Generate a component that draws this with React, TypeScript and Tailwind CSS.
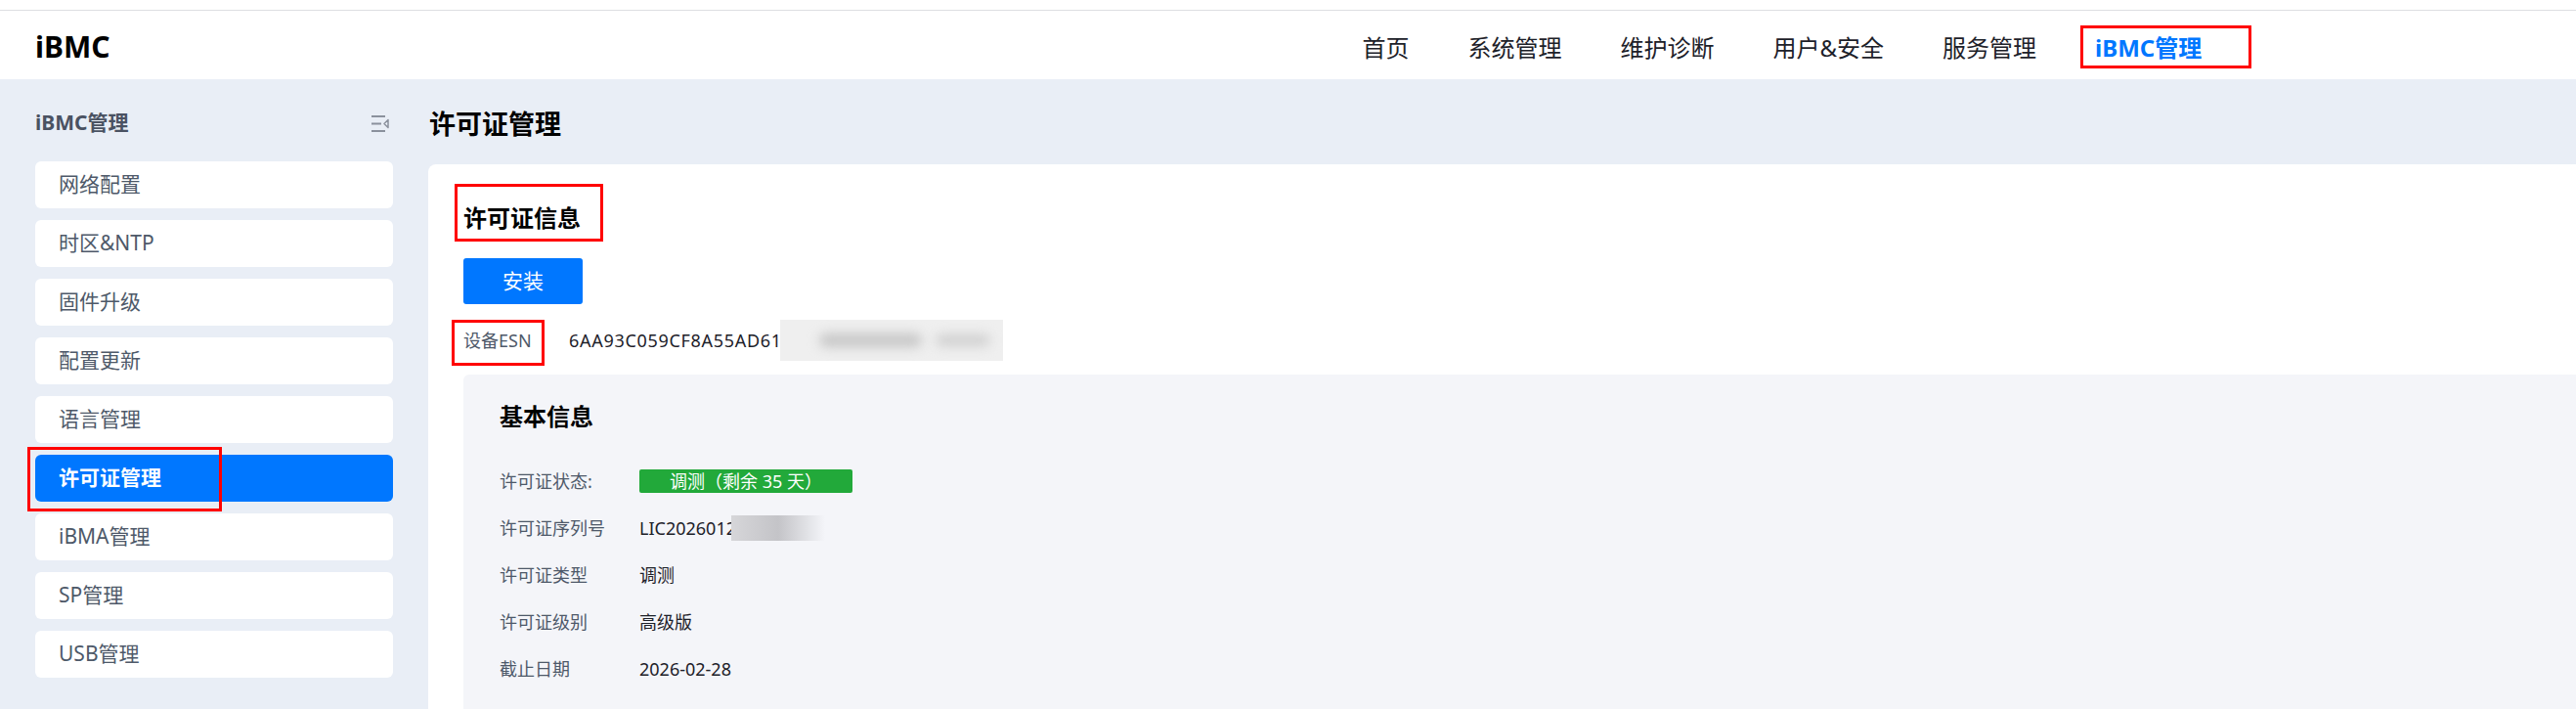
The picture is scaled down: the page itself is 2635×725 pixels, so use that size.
import React from "react";

const NAV = ["首页", "系统管理", "维护诊断", "用户&安全", "服务管理"];

const MENU = [
  "网络配置",
  "时区&NTP",
  "固件升级",
  "配置更新",
  "语言管理",
  "许可证管理",
  "iBMA管理",
  "SP管理",
  "USB管理",
];

const ROWS: [string, React.ReactNode][] = [
  [
    "许可证状态:",
    <span className="inline-block w-[218px] h-[24px] leading-[24px] rounded-[2px] bg-[#22a93a] text-white text-center">
      调测（剩余 35 天）
    </span>,
  ],
  [
    "许可证序列号",
    <span className="flex items-center">
      LIC2026012
      <span className="ml-[-5px] w-[96px] h-[26px] bg-gradient-to-r from-[#d6d6d9] via-[#c4c4c8] to-[#f4f5f9]"></span>
    </span>,
  ],
  ["许可证类型", "调测"],
  ["许可证级别", "高级版"],
  ["截止日期", "2026-02-28"],
];

// red annotation frame drawn over an element
const Mark: React.FC<{ className: string }> = ({ className }) => (
  <span className={`absolute border-[3px] border-[#ff0000] pointer-events-none ${className}`}></span>
);

const CollapseIcon: React.FC = () => (
  <svg width="18" height="17" viewBox="0 0 18 17" fill="none" stroke="#8b919d" strokeWidth="2">
    <line x1="0" y1="1" x2="14" y2="1" />
    <line x1="0" y1="8.5" x2="10" y2="8.5" />
    <line x1="0" y1="16" x2="14" y2="16" />
    <polygon points="17,4.5 13,8.5 17,12.5" strokeWidth="1.5" strokeLinejoin="round" />
  </svg>
);

const Sidebar: React.FC = () => (
  <aside className="w-[438px] shrink-0 pl-[36px] pr-[36px] pt-[27px]">
    <div className="h-[36px] flex items-center justify-between mb-[21px]">
      <span className="text-[21px] font-bold text-[#4a5262]">iBMC管理</span>
      <span className="mr-[4px] flex">
        <CollapseIcon />
      </span>
    </div>
    <nav className="flex flex-col gap-[12px]">
      {MENU.map((m) =>
        m === "许可证管理" ? (
          <div
            key={m}
            className="relative h-[48px] rounded-[6px] bg-[#0077ff] pl-[24px] flex items-center text-[21px] font-bold text-white"
          >
            {m}
            <Mark className="-left-[8px] -top-[8px] w-[199px] h-[66px]" />
          </div>
        ) : (
          <div
            key={m}
            className="h-[48px] rounded-[6px] bg-white pl-[24px] flex items-center text-[21px] text-[#4e5969]"
          >
            {m}
          </div>
        )
      )}
    </nav>
  </aside>
);

const App: React.FC = () => {
  return (
    <div className="w-[2635px] h-[725px] overflow-hidden bg-[#e9eef6] font-['Noto_Sans','Noto_Sans_CJK_SC',sans-serif] text-[#1d2129]">
      <div className="h-[11px] bg-white border-b border-[#dedfe2]"></div>
      <header className="h-[70px] bg-white flex items-center pl-[36px]">
        <span className="text-[30px] leading-none font-bold text-black pt-[4px]">iBMC</span>
        <nav className="ml-[1281px] flex items-center gap-[60px] pt-[6px] text-[24px] leading-none">
          {NAV.map((n) => (
            <span key={n}>{n}</span>
          ))}
          <span className="relative font-bold text-[#0077ff]">
            iBMC管理
            <Mark className="-left-[15px] -top-[11px] w-[175px] h-[44px]" />
          </span>
        </nav>
      </header>

      <div className="flex h-[644px]">
        <Sidebar />
        <main className="flex-1 min-w-0 flex flex-col">
          <div className="h-[87px] shrink-0 flex items-center pt-[6px] pl-[1px]">
            <h1 className="text-[27px] font-bold text-black">许可证管理</h1>
          </div>
          <section className="flex-1 bg-white rounded-tl-[8px] pl-[36px] pt-[37px] flex flex-col">
            <div className="relative self-start">
              <h2 className="text-[24px] leading-[36px] font-bold text-black">许可证信息</h2>
              <Mark className="-left-[9px] -top-[17px] w-[152px] h-[59px]" />
            </div>
            <button className="mt-[23px] w-[122px] h-[47px] rounded-[3px] bg-[#0077ff] text-white text-[21px]">
              安装
            </button>
            <div className="mt-[19px] h-[36px] flex items-center text-[18px]">
              <span className="relative w-[108px] text-[#4e5969]">
                设备ESN
                <Mark className="-left-[12px] -top-[8px] w-[95px] h-[47px]" />
              </span>
              <span className="tracking-[0.7px]">6AA93C059CF8A55AD61</span>
              <span className="relative ml-[-2px] w-[228px] h-[42px] bg-[#efefef] flex items-center overflow-hidden">
                <span className="ml-[40px] w-[105px] h-[14px] rounded-full bg-[#c6c6c6] blur-[6px]"></span>
                <span className="ml-[14px] w-[56px] h-[12px] rounded-full bg-[#cfcfcf] blur-[6px]"></span>
              </span>
            </div>

            <div className="mt-[17px] flex-1 bg-[#f4f5f9] rounded-tl-[6px] pl-[37px] pt-[25px]">
              <h3 className="text-[24px] leading-[36px] font-bold text-black">基本信息</h3>
              <div className="mt-[24px] flex flex-col text-[18px]">
                {ROWS.map(([label, value]) => (
                  <div key={label} className="h-[48px] flex items-center">
                    <span className="w-[143px] text-[#4e5969]">{label}</span>
                    <span>{value}</span>
                  </div>
                ))}
              </div>
            </div>
          </section>
        </main>
      </div>
    </div>
  );
};

export default App;
